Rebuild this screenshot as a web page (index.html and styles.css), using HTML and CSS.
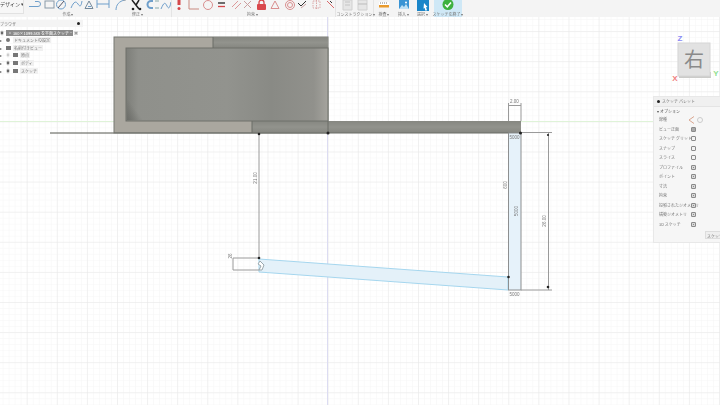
FILE: index.html
```html
<!DOCTYPE html>
<html lang="ja">
<head>
<meta charset="utf-8">
<title>スケッチ</title>
<link rel="stylesheet" href="styles.css">
</head>
<body>
<div class="app">
  <header class="toolbar">
    <div class="design-btn">デザイン ▾</div>
    <div class="group g-create">
      <svg class="icons" width="84" height="11" viewBox="0 0 84 11" fill="none" stroke="#6f9fcb" stroke-width="1">
        <path d="M0 6.500H9a2.500 2.500 0 0 0 0-5H6"/>
        <rect x="16" y="1" width="9" height="7" stroke="#8a9aa8"/>
        <circle cx="32" cy="4.500" r="4.500"/><path d="M29 8l6-7" stroke="#556"/>
        <path d="M42 8C45 1 47 1 49 4s3 3 4-3"/>
        <path d="M56 8.500L60 1l4 7.500z" stroke="#75899a"/><path d="M59 6.500h3" stroke="#6f9fcb"/>
        <path d="M68 0v8M80 0v8M68 4h12" stroke="#6f9fcb"/>
      </svg>
      <span class="label shift-create">作成 ▾</span>
    </div>
    <div class="group g-modify">
      <svg class="icons" width="56" height="11" viewBox="0 0 56 11" fill="none" stroke="#6f9fcb" stroke-width="1">
        <path d="M1 10C1 5 4 1 10 0"/><path d="M8 0h3" stroke="#999"/>
        <path d="M17 0l7 9M24 0l-3 5" stroke="#222" stroke-width="1.500"/><circle cx="18" cy="9" r="1.300" fill="#222" stroke="none"/><circle cx="25" cy="9" r="1.300" fill="#222" stroke="none"/>
        <path d="M38 1h-2a3.500 3.500 0 0 0 0 7h2" stroke-width="2"/><path d="M44 1h-4M44 8h-4" stroke="#8aa"/>
        <path d="M46 9c3-7 4-7 6-3s3 1 4-4"/>
      </svg>
      <span class="label shift-modify">修正 ▾</span>
    </div>
    <div class="group g-constrain">
      <svg class="icons" width="160" height="11" viewBox="0 0 160 11" fill="none" stroke="#d98f8f" stroke-width="1">
        <path d="M3 0v5" stroke="#d4474a" stroke-width="3"/><circle cx="3" cy="8.500" r="1.500" fill="#d4474a" stroke="none"/>
        <path d="M13 0v9h10" stroke="#c98a80"/>
        <circle cx="32" cy="5" r="4.500"/>
        <path d="M42 3h7" stroke="#222" stroke-width="1.300"/><path d="M42 6.500h7" stroke="#d4474a" stroke-width="1.300"/>
        <path d="M56 7l6-6M59 9l6-6" stroke="#d99"/>
        <path d="M68 1l7 7M75 1l-7 7" stroke="#c9a0a0"/>
        <rect x="81" y="4" width="9" height="6" rx="1" fill="#d9484c" stroke="none"/><path d="M83 4V2.500a2.500 2.500 0 0 1 5 0V4" stroke="#d9484c" stroke-width="1.300"/>
        <path d="M95 8.500L99 1l4 7.500z"/>
        <circle cx="114" cy="5" r="4.500"/><circle cx="114" cy="5" r="2.500"/>
        <path d="M122 3l3 3 5-5" stroke="#333"/><path d="M125 8l5-4" stroke="#c9a0a0"/>
        <path d="M137 1h7v7h-7zM140.500 0v9" stroke="#dba8a8" stroke-dasharray="1.500 1"/>
        <path d="M151 1l7 7" stroke="#d9686a"/><path d="M154 1l2 2" stroke="#333"/>
      </svg>
      <span class="label shift-constrain">拘束 ▾</span>
    </div>
    <div class="group g-construct">
      <svg class="icons" width="28" height="11" viewBox="0 0 28 11" stroke="#d0d0d0" fill="#e6e6e6">
        <path d="M1 0h9v10H1z"/><path d="M3 2h5M3 5h5" stroke="#c4c4c4"/>
        <path d="M16 0h9v10h-9z"/><path d="M16 4h9" stroke="#bbb"/>
      </svg>
      <span class="label">コンストラクション ▾</span>
    </div>
    <div class="group g-inspect">
      <svg class="icons" width="10" height="11" viewBox="0 0 10 11">
        <rect width="10" height="3" y="2" fill="#fff"/><path d="M1 3h8" stroke="#777" stroke-dasharray="1 1"/>
        <rect width="10" height="2.500" y="5" fill="#e99a2c"/>
      </svg>
      <span class="label">検査 ▾</span>
    </div>
    <div class="group g-insert">
      <svg class="icons" width="10" height="11" viewBox="0 0 10 11">
        <rect width="10" height="9" fill="#3a94d4"/><path d="M0 9l3-4 2 2 2-3 3 5z" fill="#bfe0f4"/><circle cx="7" cy="2.500" r="1" fill="#fff"/>
      </svg>
      <span class="label">挿入 ▾</span>
    </div>
    <div class="group g-select">
      <svg class="icons" width="12" height="11" viewBox="0 0 12 11">
        <rect width="12" height="11" fill="#1b86c9"/><path d="M7 3l3.500 4-1.500.3 1 3-1.500.4-1-3-1 1z" fill="#fff"/>
      </svg>
      <span class="label">選択 ▾</span>
    </div>
    <div class="group g-finish">
      <svg class="icons" width="12" height="11" viewBox="0 0 12 11">
        <circle cx="6" cy="4.500" r="5.500" fill="#3eb13f"/><path d="M3 4.500l2.300 2.300L9 2.500" fill="none" stroke="#fff" stroke-width="1.500"/>
      </svg>
      <span class="label">スケッチを終了 ▾</span>
    </div>
  </header>

  <main class="canvas">
    <svg class="drawing" viewBox="0 17 720 388" width="720" height="388">
      <defs>
        <pattern id="minor" x="26.700" y="1" width="6.020" height="6.020" patternUnits="userSpaceOnUse">
          <path d="M0 0V6.020M0 0H6.020" stroke="#f5f5f5" stroke-width="1" fill="none"/>
        </pattern>
        <pattern id="major" x="26.700" y="1" width="30.100" height="30.100" patternUnits="userSpaceOnUse">
          <path d="M0 0V30.100M0 0H30.100" stroke="#e8e8e8" stroke-width="1" fill="none"/>
        </pattern>
        <linearGradient id="inner" x1="0" x2="1" y1="0" y2="0">
          <stop offset="0" stop-color="#7d7e79"/><stop offset=".06" stop-color="#8f908b"/>
          <stop offset=".5" stop-color="#92938e"/><stop offset=".72" stop-color="#898a85"/>
          <stop offset=".93" stop-color="#91918c"/><stop offset="1" stop-color="#a5a49e"/>
        </linearGradient>
        <linearGradient id="bar" x1="0" x2="0" y1="0" y2="1">
          <stop offset="0" stop-color="#868781"/><stop offset=".5" stop-color="#92938d"/><stop offset="1" stop-color="#858680"/>
        </linearGradient>
        <linearGradient id="shadow" x1="0" x2="1" y1="1" y2="0">
          <stop offset="0" stop-color="#5f605c" stop-opacity=".6"/><stop offset=".45" stop-color="#5f605c" stop-opacity="0"/>
        </linearGradient>
      </defs>
      <rect y="17" width="720" height="388" fill="#fff"/>
      <rect y="17" width="720" height="388" fill="url(#minor)"/>
      <rect y="17" width="720" height="388" fill="url(#major)"/>
      <path class="axis-y" d="M327.500 17V405"/>
      <path class="axis-x" d="M0 121.500H720"/>

      <g class="soft">
        <path class="ground" d="M50 133H114"/>
        <rect x="114" y="37" width="214" height="96" fill="#aaa79f" stroke="#777872"/>
        <rect x="213" y="37" width="115" height="11" fill="url(#bar)"/>
        <rect x="252" y="121" width="76" height="12" fill="url(#bar)"/>
        <rect x="126" y="48" width="202" height="73" fill="url(#inner)" stroke="#6f706b"/>
        <rect x="127" y="95" width="18" height="25" fill="url(#shadow)"/>
        <rect x="328" y="121" width="193" height="12" fill="url(#bar)"/>
        <path class="edge" d="M213 37V48M252 121V133M328 121V133M114 133H521"/>

        <polygon class="profile" points="259,259 508,277 508,290 259,272"/>
        <rect class="slot" x="508.500" y="133" width="12.500" height="157"/>

        <path class="dim" d="M259 133V258M233 258H259M233 270H259M233 258V270"/>
        <path class="dim" d="M508.500 103V121M521 103V121M508 105.500H521"/>
        <path class="dim" d="M521 132.500H552M521 290H552M548.500 133V290"/>
        <polygon class="cursor" points="258,264 260,261 264,265 262,270 259,270 261,266"/>

        <g class="dots">
          <circle cx="259" cy="134" r="1.300"/><circle cx="259" cy="258" r="1.300"/>
          <circle cx="328" cy="133" r="1.500"/><circle cx="520.500" cy="133" r="1.500"/>
          <circle cx="508.500" cy="277" r="1.300"/><circle cx="548" cy="287" r="1.300"/>
          <circle cx="548" cy="135" r="1.100"/>
        </g>

        <g class="dim-text">
          <text x="514.500" y="103">2.00</text>
          <text x="514.500" y="139">5000</text>
          <text x="514.500" y="296">5000</text>
          <text transform="translate(257 178) rotate(-90)">21.00</text>
          <text transform="translate(546 221) rotate(-90)">26.00</text>
          <text transform="translate(507 185) rotate(-90)">600</text>
          <text transform="translate(518 211) rotate(-90)">5000</text>
          <text transform="translate(232 256) rotate(-90)">26</text>
        </g>
      </g>

      <g class="cube">
        <rect x="679" y="72" width="32" height="6" fill="#cbcbc9"/>
        <rect x="678" y="43" width="32" height="33" fill="#e2e2e2" stroke="#d6d6d6"/>
        <text class="cube-face" x="694" y="67">右</text>
        <text class="axis-z" x="680" y="41">Z</text>
        <text class="axis-lx" x="675" y="81">X</text>
        <text class="axis-ly" x="716" y="76">Y</text>
      </g>
    </svg>

    <aside class="browser">
      <div class="browser-title"><span>ブラウザ</span><i class="pin"></i></div>
      <div class="tree-root">
        <span class="eye">◉</span>
        <span class="root-name">▫ 360×1099.5x8 を平面スケッチ・</span>
        <span class="root-x">×</span>
      </div>
      <ul class="tree">
        <li><span class="eye">▸</span><span class="gear"></span><span class="tree-name">ドキュメントの設定</span></li>
        <li><span class="eye">▸</span><span class="folder"></span><span class="tree-name">名前付きビュー</span></li>
        <li><span class="eye">▸</span><span class="vis off">◉</span><span class="folder"></span><span class="tree-name">原点</span></li>
        <li><span class="eye">▸</span><span class="vis">◉</span><span class="folder"></span><span class="tree-name">ボディ</span></li>
        <li><span class="eye">▸</span><span class="vis">◉</span><span class="folder"></span><span class="tree-name">スケッチ</span></li>
      </ul>
    </aside>

    <aside class="palette">
      <div class="palette-title"><i class="pin"></i><span>スケッチ パレット</span></div>
      <div class="palette-head">▾ オプション</div>
      <ul class="options">
        <li><span>線種</span><span class="linetype"><svg width="16" height="8" viewBox="0 0 16 8" fill="none"><path d="M6 .500L1 4l5 3.500" stroke="#d9a58f"/><circle cx="12" cy="4" r="2.500" stroke="#ccc"/></svg></span></li>
        <li><span>ビュー正面</span><b class="box view"></b></li>
        <li><span>スケッチ グリッド</span><b class="box"></b></li>
        <li><span>スナップ</span><b class="box"></b></li>
        <li><span>スライス</span><b class="box"></b></li>
        <li><span>プロファイル</span><b class="box on"></b></li>
        <li><span>ポイント</span><b class="box on"></b></li>
        <li><span>寸法</span><b class="box on"></b></li>
        <li><span>拘束</span><b class="box on"></b></li>
        <li><span>投影されたジオメトリ</span><b class="box on"></b></li>
        <li><span>構築ジオメトリ</span><b class="box on"></b></li>
        <li><span>3D スケッチ</span><b class="box on"></b></li>
      </ul>
      <div class="palette-foot"><span class="finish-btn">スケッチを終了</span></div>
    </aside>
  </main>
</div>
</body>
</html>
```
FILE: styles.css
```css
* { box-sizing: border-box; }
html, body { margin: 0; height: 100%; overflow: hidden; background: #fff; }
body { font-family: "Noto Sans CJK JP", "Noto Sans", sans-serif; color: #666; }
ul { list-style: none; margin: 0; padding: 0; }

.app { width: 720px; height: 405px; display: flex; flex-direction: column; }

.toolbar {
  height: 17px; flex: none; display: flex; align-items: flex-start;
  background: #f4f4f4; filter: blur(.25px);
}
.design-btn {
  width: 24px; height: 14px; font-size: 5px; line-height: 8px; color: #444;
  background: #f7f7f7; border-right: 1px solid #e2e2e2; border-bottom: 1px solid #e2e2e2;
  text-align: right; padding-right: 2px; white-space: nowrap; overflow: hidden;
}
.group { display: flex; flex-direction: column; align-items: center; height: 17px; flex: none; }
.icons { display: block; flex: none; }
.label { font-size: 4px; line-height: 5px; margin-top: 1px; color: #777; white-space: nowrap; }
.shift-create { margin-right: 6px; }
.shift-modify { margin-right: 10px; }
.shift-constrain { margin-right: 6px; }

.g-create { width: 86px; margin-left: 4px; }
.g-modify { width: 58px; margin-right: 4px; border-right: 1px solid #e4e4e4; }
.g-constrain { width: 160px; border-right: 1px solid #e4e4e4; }
.g-construct { width: 38px; padding-left: 3px; border-right: 1px solid #e4e4e4; }
.g-inspect { width: 20px; }
.g-insert { width: 19px; }
.g-select { width: 19px; }
.g-finish { width: 28px; margin-left: 2px; background: #cfe8f6; }

.canvas { position: relative; flex: 1; }
.drawing { display: block; }
.soft { filter: blur(.3px); }
.axis-y { stroke: #dcdcf2; stroke-width: 1; fill: none; }
.axis-x { stroke: #dff3d8; stroke-width: 1; fill: none; }
.ground { stroke: #55564f; stroke-width: 1; fill: none; }
.edge { stroke: #6b6c66; stroke-width: 1; fill: none; }
.profile { fill: #e4f1f9; stroke: #a5d6ee; stroke-width: 1; }
.slot { fill: #e6f2fa; stroke: #8d8f90; stroke-width: 1; }
.dim { stroke: #9a9a9a; stroke-width: 1; fill: none; }
.cursor { fill: #fff; stroke: #9aa7ad; stroke-width: 1; }
.dots { fill: #222; }
.dim-text { font-size: 4.500px; fill: #777; text-anchor: middle; font-family: "Liberation Sans", sans-serif; }
.cube-face { font-size: 20px; fill: #8a8a8a; text-anchor: middle; }
.axis-z, .axis-lx, .axis-ly { font-size: 8px; font-family: "Liberation Sans", sans-serif; text-anchor: middle; font-weight: 700; }
.axis-z { fill: #8a8af5; }
.axis-lx { fill: #f08080; }
.axis-ly { fill: #8fe08f; }

.browser { position: absolute; left: 0; top: 3px; width: 83px; font-size: 4px; line-height: 6px; color: #777; filter: blur(.2px); }
.browser-title { height: 7px; display: flex; justify-content: space-between; align-items: center; background: #f4f4f4; padding: 0 3px 0 0; font-size: 4px; }
.pin { display: block; width: 3px; height: 3px; border-radius: 50%; background: #222; flex: none; }
.tree-root { display: flex; align-items: center; height: 8px; margin-top: 2px; white-space: nowrap; }
.eye { width: 6px; flex: none; font-size: 4px; color: #666; }
.vis { width: 7px; flex: none; font-size: 4px; color: #666; }
.vis.off { color: #ccc; }
.root-name { width: 67px; height: 6px; background: #8b8b8b; color: #fff; overflow: hidden; padding-left: 2px; }
.root-x { margin-left: 1px; width: 4px; height: 4px; background: #ddd; color: #333; line-height: 4px; text-align: center; }
.tree { margin-top: -1px; }
.tree li { display: flex; align-items: center; height: 7.800px; white-space: nowrap; }
.gear, .folder { display: block; flex: none; width: 5px; height: 4px; background: #777; margin-right: 2px; }
.gear { border-radius: 50%; width: 4px; margin-right: 3px; }
.tree-name { background: #f0f0f0; padding: 0 1px; height: 6px; }

.palette {
  position: absolute; left: 653px; top: 79px; width: 67px; height: 147px;
  background: #f6f6f6; border: 1px solid #e8e8e8; border-right: 0;
  font-size: 4px; line-height: 5px; color: #777; filter: blur(.2px);
  display: flex; flex-direction: column;
}
.palette-title { height: 9px; display: flex; align-items: center; gap: 2px; padding-left: 3px; background: #f0f0f0; flex: none; }
.palette-head { height: 9px; line-height: 9px; padding-left: 3px; color: #555; flex: none; border-top: 1px solid #e4e4e4; }
.options li { display: flex; align-items: center; justify-content: space-between; height: 9.500px; padding: 0 22px 0 5px; white-space: nowrap; position: relative; }
.box { display: block; flex: none; width: 5px; height: 5px; border: 1px solid #8a8a8a; border-radius: 1px; background: #f2f2f2; position: absolute; left: 37px; }
.box.on { background: #8a8a8a; box-shadow: inset 0 0 0 1px #d8d8d8; }
.box.view { background: #aaa; }
.linetype { position: absolute; left: 34px; display: flex; }
.palette-foot { flex: 1; display: flex; justify-content: flex-end; align-items: flex-end; padding-bottom: 3px; }
.finish-btn { width: 15px; height: 8px; line-height: 8px; background: #efefef; border: 1px solid #ddd; border-right: 0; overflow: hidden; white-space: nowrap; padding-left: 1px; }
```
